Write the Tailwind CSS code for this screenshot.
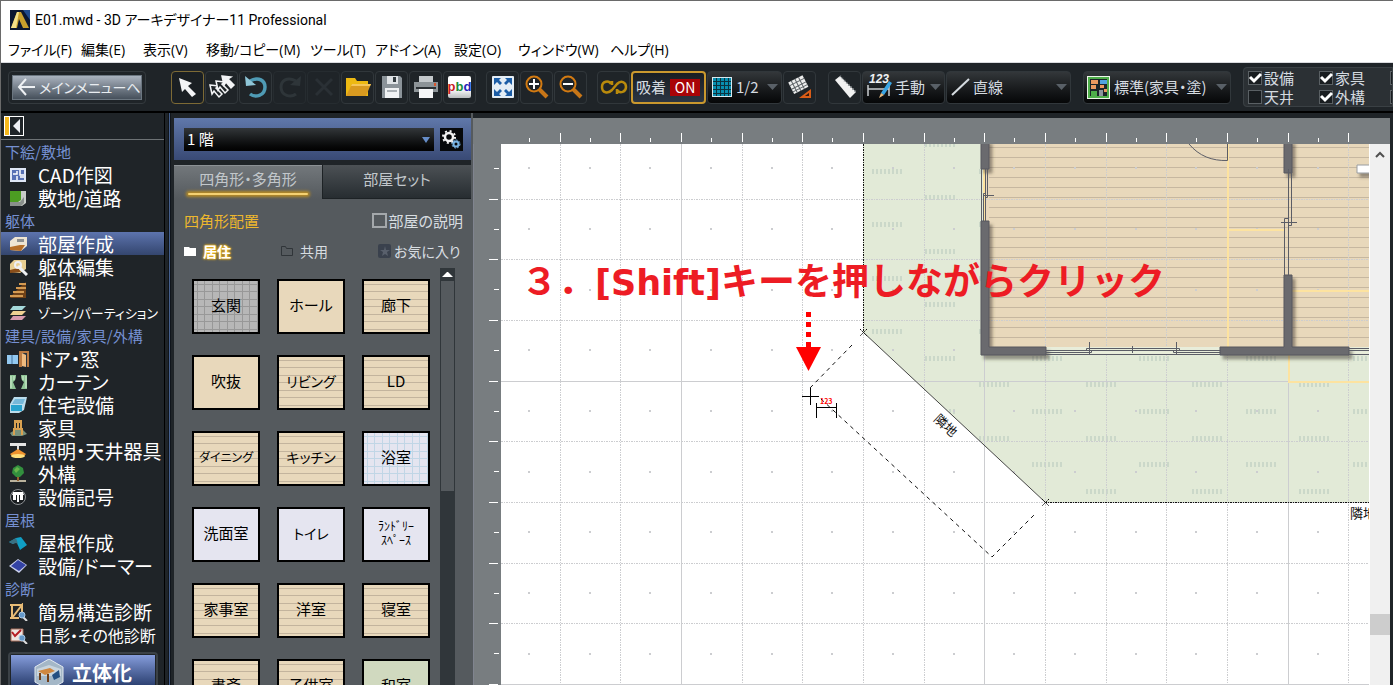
<!DOCTYPE html>
<html lang="ja">
<head>
  <meta charset="UTF-8">
  <meta name="viewport" content="width=device-width, initial-scale=1.0">
  <title>E01.mwd - 3D アーキデザイナー11 Professional</title>
  <script src="https://cdn.jsdelivr.net/npm/@tailwindcss/browser@4"></script>
</head>
<body class="flex h-screen flex-col overflow-hidden border-t border-l border-[#6a6a6a] bg-[#1f2428] font-['Noto_Sans_CJK_JP',sans-serif] text-[15px] leading-5 [font-feature-settings:'palt']">

  <!-- Title and menu -->
  <header class="shrink-0 border-b border-[#d9dade] bg-white text-black">
    <div class="flex h-[37px] items-center gap-[5px] pl-2 font-['Roboto','Noto_Sans_CJK_JP',sans-serif] text-[14px]">
      <svg width="21" height="20" viewBox="0 0 21 20"><rect x="1" width="20" height="20" fill="#0b1730"/><path d="M14 0h7v10z" fill="#1f4a8c"/><path d="M8 2h4l8 16h-6L10 9 8 18H2z" fill="#c9a02c"/><path d="M8 2h2L7 18H2z" fill="#f3e08a"/></svg>
      <h1>E01.mwd - 3D アーキデザイナー11 Professional</h1>
    </div>
    <nav class="flex h-6 items-center whitespace-nowrap pl-[7px] font-['Open_Sans','Noto_Sans_CJK_JP',sans-serif] text-[14px]">
      <a href="#" class="w-[73px]">ファイル(F)</a>
      <a href="#" class="w-[62px]">編集(E)</a>
      <a href="#" class="w-[63px]">表示(V)</a>
      <a href="#" class="w-[104px]">移動/コピー(M)</a>
      <a href="#" class="w-[65px]">ツール(T)</a>
      <a href="#" class="w-[79px]">アドイン(A)</a>
      <a href="#" class="w-[64px]">設定(O)</a>
      <a href="#" class="w-[92px]">ウィンドウ(W)</a>
      <a href="#">ヘルプ(H)</a>
    </nav>
  </header>

  <!-- Toolbar -->
  <div class="flex h-[50px] shrink-0 items-center overflow-hidden border-b-2 border-black pl-[7px] text-[#d5dbe0]">
    <button class="mr-[25px] flex h-[33px] w-[138px] shrink-0 rounded border border-[#343a3e] p-[3px]">
      <span class="flex h-full w-full items-center gap-1 border border-[#6b7680] bg-linear-to-b from-[#aab3bf] to-[#46505b] pl-1 text-[14px] whitespace-nowrap text-[#e9edf1]">
        <svg class="shrink-0" width="18" height="18" viewBox="0 0 18 18" fill="none" stroke="#eef1f4" stroke-width="2"><path d="M18 9H2M9 1L2 9l7 8"/></svg>メインメニューへ
      </span>
    </button>

    <div class="mr-2.5 flex shrink-0 gap-px">
      <button aria-label="選択" class="grid size-[33px] place-items-center rounded border border-[#7d6a35] bg-[#1a1f23]"><svg width="24" height="24" viewBox="0 0 24 24"><path d="M3 3l13 5-4 3 8 8-4 3-7-8-3 3z" fill="#f3f4f6"/></svg></button>
      <button aria-label="複数選択" class="grid size-[33px] place-items-center rounded border border-[#31373b]"><svg width="28" height="28" viewBox="0 0 28 28" fill="#1f2428" stroke="#f3f4f6" stroke-width="1.5"><path d="M2 12l9 1-3 2 6 6-3 3-5-6-2 3z"/><path d="M8 8l9 1-3 2 6 6-3 3-5-6-2 3z"/><path d="M14 3l9 1-3 2 6 6-3 3-5-6-2 3z" fill="#f3f4f6"/></svg></button>
      <button aria-label="元に戻す" class="grid size-[33px] place-items-center rounded border border-[#31373b]"><svg width="24" height="24" viewBox="0 0 24 24"><path d="M6 6c9-5 15 0 15 6 0 9-10 11-15 7" fill="none" stroke="#4f9bb5" stroke-width="3.5"/><path d="M1 1l1 10 10-1z" fill="#8fc6d8"/></svg></button>
      <button aria-label="やり直し" class="grid size-[33px] place-items-center rounded border border-[#262c30]"><svg width="24" height="24" viewBox="0 0 24 24"><path d="M18 6C9 1 3 6 3 12c0 9 10 11 15 7" fill="none" stroke="#2e3539" stroke-width="3"/><path d="M23 1l-1 10-10-1z" fill="#2e3539"/></svg></button>
      <button aria-label="削除" class="grid size-[33px] place-items-center rounded border border-[#262c30]"><svg width="20" height="20" viewBox="0 0 20 20"><path d="M2 2l16 16M18 2L2 18" stroke="#2a3035" stroke-width="3"/></svg></button>
      <button aria-label="開く" class="grid size-[33px] place-items-center rounded border border-[#31373b]"><svg width="26" height="22" viewBox="0 0 26 22"><path d="M1 2h9l2 3h11v15H1z" fill="#edb912"/><path d="M7 8h19l-5 12H1z" fill="#d99a20"/><path d="M7 8h19l-1 2H6z" fill="#f5c65a"/></svg></button>
      <button aria-label="保存" class="grid size-[33px] place-items-center rounded border border-[#31373b]"><svg width="20" height="22" viewBox="0 0 20 22"><path d="M0 0h18l2 2v20H0z" fill="#8b9399"/><path d="M5 0h11v8H5z" fill="#dfe3e6"/><path d="M11 1h3v5h-3z" fill="#333b40"/><path d="M3 12h14v10H3z" fill="#f0f2f4"/><path d="M5 14h10v2H5z" fill="#aab0b5"/></svg></button>
      <button aria-label="印刷" class="grid size-[33px] place-items-center rounded border border-[#31373b]"><svg width="24" height="22" viewBox="0 0 24 22"><path d="M5 0h14v6H5z" fill="#c3c8cb"/><path d="M0 6h24v10H0z" fill="#8c9397"/><path d="M2 11h20v2H2z" fill="#2b3034"/><path d="M5 13h14v9H5z" fill="#f5f6f7"/><path d="M20 7h2v3h-2z" fill="#d9552c"/></svg></button>
      <button aria-label="pbd" class="grid size-[33px] place-items-center rounded border border-[#31373b]"><span class="flex h-[22px] w-[23px] items-center justify-center rounded-xs bg-linear-to-b from-white from-60% to-[#b9bcbe] font-['Liberation_Sans',sans-serif] text-[13px] font-bold"><span class="text-[#c91c25]">p</span><span class="text-[#1b8d3c]">b</span><span class="text-[#2524b8]">d</span></span></button>
    </div>

    <div class="mr-2.5 flex shrink-0 gap-px">
      <button aria-label="全体表示" class="grid size-[33px] place-items-center rounded border border-[#31373b]"><svg width="22" height="22" viewBox="0 0 22 22"><rect width="22" height="22" rx="1" fill="#e4edf5"/><g fill="#1c5da6"><path d="M2 2h7L7 4l3 3-2 2-3-3-3 3zM20 2v7l-3-3-3 3-2-2 3-3-2-2zM2 20v-7l3 3 3-3 2 2-3 3 2 2zM20 20h-7l2-2-3-3 2-2 3 3 3-3z"/></g></svg></button>
      <button aria-label="拡大" class="grid size-[33px] place-items-center rounded border border-[#31373b]"><svg width="24" height="24" viewBox="0 0 24 24" fill="none"><path d="M14 14l8 8" stroke="#c87618" stroke-width="4"/><circle cx="9" cy="9" r="7.5" stroke="#d27a12" stroke-width="2"/><path d="M9 4v10M4 9h10" stroke="#fff" stroke-width="2"/></svg></button>
      <button aria-label="縮小" class="grid size-[33px] place-items-center rounded border border-[#31373b]"><svg width="24" height="24" viewBox="0 0 24 24" fill="none"><path d="M14 14l8 8" stroke="#c87618" stroke-width="4"/><circle cx="9" cy="9" r="7.5" stroke="#d27a12" stroke-width="2"/><path d="M4 9h10" stroke="#fff" stroke-width="2"/></svg></button>
    </div>

    <div class="mr-3 flex shrink-0 gap-px">
      <button aria-label="連続" class="grid size-[33px] place-items-center rounded border border-[#31373b]"><svg width="28" height="18" viewBox="0 0 28 18" fill="none" stroke="#b98a0c" stroke-width="2.5"><path d="M11 6C9 2 2 3 2 9s6 7 10 3l5-6c4-4 9-2 9 3s-6 7-9 3M12 3v4M17 16v-5"/></svg></button>
      <button class="flex h-[33px] w-[75px] items-center gap-1 rounded border-2 border-[#c9982e] bg-linear-to-b from-[#191e23] to-[#2c3643] pl-[3px]">吸着<span class="flex h-[17px] w-[30px] items-center justify-center bg-[#a90407] text-[14px] leading-4 text-white">ON</span></button>
      <div class="relative">
        <select aria-label="グリッド" class="h-[33px] w-[75px] appearance-none rounded border border-[#31373b] bg-linear-to-b from-[#33373a] to-[#060708] pl-7 text-[15px]"><option>1/2</option></select>
        <svg class="pointer-events-none absolute top-[6px] left-[5px]" width="20" height="20" viewBox="0 0 20 20"><rect width="20" height="20" fill="#d9e9ef"/><rect x="1" y="1" width="18" height="18" fill="#088fb0"/><path d="M4.500 1v18M8.500 1v18M12.500 1v18M16.500 1v18M1 4.500h18M1 8.500h18M1 12.500h18M1 16.500h18" stroke="#0c323e"/></svg>
        <svg class="pointer-events-none absolute top-[13px] right-1" width="11" height="6"><path d="M0 0h11L5.500 6z" fill="#596067"/></svg>
      </div>
      <button aria-label="グリッド角度" class="grid size-[33px] place-items-center rounded border border-[#31373b]"><svg width="24" height="24" viewBox="0 0 24 24"><g transform="rotate(-27 11 11)"><rect x="3" y="3" width="16" height="13" fill="#ededed"/><path d="M6.500 3v13M10.500 3v13M14.500 3v13M3 6.500h16M3 10.500h16M3 13.500h16" stroke="#5b6165"/></g><path d="M22 16v6H14z" fill="#32180c" stroke="#d95c17" stroke-width="2"/></svg></button>
    </div>

    <div class="mr-3 flex shrink-0 gap-px">
      <button aria-label="メジャー" class="grid size-[33px] place-items-center rounded border border-[#31373b]"><svg width="24" height="24" viewBox="0 0 24 24"><path d="M2 5l5-4 16 16-6 6z" fill="#f2f2f2"/><path d="M7 1l16 16" stroke="#7b8185" stroke-width="2" stroke-dasharray="1 2"/></svg></button>
      <div class="relative">
        <select aria-label="寸法" class="h-[33px] w-[83px] appearance-none rounded border border-[#31373b] bg-linear-to-b from-[#33373a] to-[#060708] pl-8 text-[15px]"><option>手動</option></select>
        <svg class="pointer-events-none absolute top-[2px] left-[4px]" width="28" height="28" viewBox="0 0 28 28"><text x="3" y="10" font-size="12" font-style="italic" font-weight="bold" font-family="Liberation Sans, sans-serif" fill="#eef0f2">123</text><path d="M2 12v11M23 12v11M2 16h21" stroke="#c9cdd0" stroke-width="1.500"/><path d="M23 8l3 2-8 12-3-2z" fill="#3aa5e5"/><path d="M15 20l3 2-5 3z" fill="#e7bd84"/></svg>
        <svg class="pointer-events-none absolute top-[13px] right-1" width="11" height="6"><path d="M0 0h11L5.500 6z" fill="#596067"/></svg>
      </div>
      <div class="relative">
        <select aria-label="線種" class="h-[33px] w-[125px] appearance-none rounded border border-[#31373b] bg-linear-to-b from-[#33373a] to-[#060708] pl-[26px] text-[15px]"><option>直線</option></select>
        <svg class="pointer-events-none absolute top-[6px] left-[5px]" width="19" height="19"><path d="M1 18L18 2" stroke="#d5dbe0" stroke-width="2"/></svg>
        <svg class="pointer-events-none absolute top-[13px] right-1" width="11" height="6"><path d="M0 0h11L5.500 6z" fill="#596067"/></svg>
      </div>
    </div>

    <div class="relative mr-3 shrink-0">
      <select aria-label="表示テンプレート" class="h-[33px] w-[148px] appearance-none rounded border border-[#31373b] bg-linear-to-b from-[#33373a] to-[#060708] pl-[30px] text-[15px]"><option>標準(家具・塗)</option></select>
      <svg class="pointer-events-none absolute top-[5px] left-[4px]" width="23" height="23" viewBox="0 0 23 23"><rect width="23" height="23" fill="#edf5e9"/><rect x="1" y="1" width="21" height="21" fill="#4eae4a"/><path d="M3 3h17v17H3z" fill="#1c2529"/><path d="M4 4h7v4H4zM4 9h5v4H4zM13 9h4v3h-4zM17 13h3v3h-3z" fill="#eb9a60"/><path d="M13 4h7v4h-7z" fill="#4fa3e0"/><path d="M4 15h6v5H4z" fill="#4eae4a"/><path d="M12 14h4v6h-4z" fill="#8c969d"/></svg>
      <svg class="pointer-events-none absolute top-[13px] right-1" width="11" height="6"><path d="M0 0h11L5.500 6z" fill="#596067"/></svg>
    </div>

    <fieldset class="grid h-10 min-w-0 flex-1 grid-cols-[71px_71px_16px] grid-rows-2 content-center items-center overflow-hidden rounded-l border border-[#3a4044] bg-[#2b3034] pl-1 whitespace-nowrap">
      <label class="relative flex items-center gap-0.5"><input type="checkbox" checked class="peer size-[14px] appearance-none border border-[#5a6064] bg-[#191d20]"><svg class="pointer-events-none absolute left-0 hidden peer-checked:block" width="14" height="14" fill="none" stroke="#fff" stroke-width="3"><path d="M2 6l4 4 7-7"/></svg>設備</label>
      <label class="relative flex items-center gap-0.5"><input type="checkbox" checked class="peer size-[14px] appearance-none border border-[#5a6064] bg-[#191d20]"><svg class="pointer-events-none absolute left-0 hidden peer-checked:block" width="14" height="14" fill="none" stroke="#fff" stroke-width="3"><path d="M2 6l4 4 7-7"/></svg>家具</label>
      <input type="checkbox" aria-label="表示1" class="size-[14px] appearance-none border border-[#5a6064] bg-[#191d20]">
      <label class="relative flex items-center gap-0.5"><input type="checkbox" class="peer size-[14px] appearance-none border border-[#5a6064] bg-[#191d20]">天井</label>
      <label class="relative flex items-center gap-0.5"><input type="checkbox" checked class="peer size-[14px] appearance-none border border-[#5a6064] bg-[#191d20]"><svg class="pointer-events-none absolute left-0 hidden peer-checked:block" width="14" height="14" fill="none" stroke="#fff" stroke-width="3"><path d="M2 6l4 4 7-7"/></svg>外構</label>
      <input type="checkbox" aria-label="表示2" class="size-[14px] appearance-none border border-[#5a6064] bg-[#191d20]">
    </fieldset>
  </div>

  <main class="flex min-h-0 flex-1">
    <!-- Navigation -->
    <aside class="flex w-[163px] shrink-0 flex-col overflow-hidden pt-[3px]">
      <button aria-label="メニューを閉じる" class="mb-[3px] ml-[3px] flex size-5 shrink-0 border border-white bg-[#1f2428]"><svg width="18" height="18"><path d="M0 0h4v18H0z" fill="#f5b81c"/><path d="M4 0h1v18H4z" fill="#fff"/><path d="M15 2v14L8 9z" fill="#eef0f4"/></svg></button>
      <nav class="border-t border-[#6d7275] whitespace-nowrap text-white">
        <h2 class="h-[23px] pl-1 text-[15px] leading-6 text-[#7590d2]">下絵/敷地</h2>
        <a href="#" class="flex h-[23px] items-center gap-2.5 pl-2 text-[19px]"><svg class="shrink-0" width="19" height="18"><rect x="1" y="2" width="16" height="14" fill="#dfe7f6"/><path d="M3 4h12v10H3z" fill="#5771b5"/><path d="M4 8h4V5M8 10v4M11 4v5h4M11 11h4" fill="none" stroke="#fff" stroke-width="1.500"/></svg>CAD作図</a>
        <a href="#" class="flex h-[23px] items-center gap-2.5 pl-2 text-[19px]"><svg class="shrink-0" width="19" height="18"><path d="M1 2h16v12l-4 3H1z" fill="#c8ccc8"/><path d="M1 2h11v9l-3 2H1z" fill="#4c9c22"/><path d="M1 13h10l4-5v6l-3 3H1z" fill="#898f8b"/></svg>敷地/道路</a>
        <h2 class="h-[23px] pl-1 text-[15px] leading-6 text-[#7590d2]">躯体</h2>
        <a href="#" aria-current="page" class="flex h-[23px] items-center gap-2.5 bg-linear-to-b from-[#5d74ae] to-[#34466f] pl-2 text-[19px]"><svg class="shrink-0" width="19" height="18"><path d="M1 6l5-4h12v9l-6 5-11-1z" fill="#eee5d3"/><path d="M8 4h7v3H8z" fill="#8f9190"/><path d="M1 12l10-2h5l-4 6-11-1z" fill="#b56e28"/></svg>部屋作成</a>
        <a href="#" class="flex h-[23px] items-center gap-2.5 pl-2 text-[19px]"><svg class="shrink-0" width="19" height="18"><path d="M1 6l4-4h12v9l-6 4-10-1z" fill="#e8cf92"/><path d="M1 12l8-2 3 4-11 1z" fill="#8b4e19"/><path d="M9 8l9 9" stroke="#eef0f4" stroke-width="3"/><circle cx="9" cy="7" r="3" fill="none" stroke="#eef0f4" stroke-width="2"/></svg>躯体編集</a>
        <a href="#" class="flex h-[23px] items-center gap-2.5 pl-2 text-[19px]"><svg class="shrink-0" width="19" height="18"><path d="M17 1v16H1l3-4 4-4 4-4z" fill="#704218"/><path d="M10 3h7M7 7h10M4 11h11M1 15h13" stroke="#d39a52" stroke-width="2"/></svg>階段</a>
        <a href="#" class="flex h-[23px] items-center gap-2.5 pl-2 text-[13px]"><svg class="shrink-0" width="19" height="18"><path d="M4 2h13l-4 4H1z" fill="#a5d9db"/><path d="M4 7h13l-4 4H1z" fill="#eed092"/><path d="M4 12h13l-4 4H1z" fill="#d79aae"/></svg>ゾーン/パーティション</a>
        <h2 class="h-[23px] pl-1 text-[15px] leading-6 text-[#7590d2]">建具/設備/家具/外構</h2>
        <a href="#" class="flex h-[23px] items-center gap-2 pl-1.5 text-[19px]"><svg class="shrink-0" width="23" height="18"><path d="M0 5h11v9H0z" fill="#93c8ef"/><path d="M5 5v9" stroke="#44729b"/><path d="M12 1h10v16H12z" fill="#bb7a42"/><path d="M15 3h5v14h-5z" fill="#29323c"/><path d="M15 3l4 2v12l-4-1z" fill="#efbb80"/></svg>ドア・窓</a>
        <a href="#" class="flex h-[23px] items-center gap-2.5 pl-2 text-[19px]"><svg class="shrink-0" width="19" height="18"><path d="M1 2h6c0 4-1 6-3 7l3 7H1zM18 2h-6c0 4 1 6 3 7l-3 7h6z" fill="#8fc596"/><path d="M2 3v12M5 3v4M17 3v12M14 3v4" stroke="#d6f0d4"/></svg>カーテン</a>
        <a href="#" class="flex h-[23px] items-center gap-2.5 pl-2 text-[19px]"><svg class="shrink-0" width="19" height="18"><path d="M5 1h13l-3 13-5 3H1V8z" fill="#bbdcec"/><path d="M6 3h10l-2 5H3z" fill="#77b8d9"/><path d="M2 9h11v6H2z" fill="#29a3ce"/></svg>住宅設備</a>
        <a href="#" class="flex h-[23px] items-center gap-2.5 pl-2 text-[19px]"><svg class="shrink-0" width="19" height="18"><path d="M1 14l5-3h8l4 4-5 2H3z" fill="#79917b"/><path d="M5 1h8v3H5z" fill="#d9a151"/><path d="M6 1v8M12 1v8M9 3v6M4 10h10M5 10v6M13 10v6" fill="none" stroke="#d9a151" stroke-width="2"/></svg>家具</a>
        <a href="#" class="flex h-[23px] items-center gap-2.5 pl-2 text-[19px]"><svg class="shrink-0" width="19" height="18"><path d="M1 1h16v3H1z" fill="#e4e4e4"/><path d="M9 4v5" stroke="#ddd" stroke-width="2"/><path d="M9 7l8 5-3 3H4l-3-3z" fill="#ef922e"/><ellipse cx="9" cy="14" rx="7" ry="2" fill="#ffdf7b"/></svg>照明・天井器具</a>
        <a href="#" class="flex h-[23px] items-center gap-2.5 pl-2 text-[19px]"><svg class="shrink-0" width="19" height="18"><path d="M1 16h16" stroke="#b9b29d" stroke-width="2"/><path d="M9 8v8" stroke="#96612e" stroke-width="2"/><path d="M9 0l5 3 1 5-4 4H7L3 8l1-5z" fill="#328f3e"/><path d="M8 2l3 2-4 4-2-3z" fill="#68b44c"/></svg>外構</a>
        <a href="#" class="flex h-[23px] items-center gap-2.5 pl-2 text-[19px]"><svg class="shrink-0" width="19" height="18"><circle cx="9" cy="9" r="7.500" fill="#191d20" stroke="#8d9194"/><path d="M4 4h10l1 3H3zM4 7h3v5H4zM8 7h2v7H8zM11 7h3v5h-3z" fill="#fff"/></svg>設備記号</a>
        <h2 class="h-[23px] pl-1 text-[15px] leading-6 text-[#7590d2]">屋根</h2>
        <a href="#" class="flex h-[23px] items-center gap-2.5 pl-2 text-[19px]"><svg class="shrink-0" width="19" height="18"><path d="M7 4l5-1 6 8-7 5-4-9-3 3-4-2z" fill="#109fc5"/><path d="M0 8l7-4 2 6-2-1-3 1z" fill="#3a7082"/></svg>屋根作成</a>
        <a href="#" class="flex h-[23px] items-center gap-2.5 pl-2 text-[19px]"><svg class="shrink-0" width="19" height="18"><path d="M0 9l9-7 9 6-8 8z" fill="#cbd1ed"/><path d="M2 9l7-6 8 5-7 6z" fill="#3443a5"/></svg>設備/ドーマー</a>
        <h2 class="h-[23px] pl-1 text-[15px] leading-6 text-[#7590d2]">診断</h2>
        <a href="#" class="flex h-[23px] items-center gap-2.5 pl-2 text-[19px]"><svg class="shrink-0" width="19" height="18" fill="none"><path d="M1 2h13M3 2v13M3 15L13 2v7M1 15h9" stroke="#e7bc77" stroke-width="2"/><path d="M14 14l4 4" stroke="#ddd" stroke-width="2"/><circle cx="13" cy="12" r="3" fill="#6599ca" stroke="#a9c9e5"/></svg>簡易構造診断</a>
        <a href="#" class="flex h-[23px] items-center gap-2.5 pl-2 text-[16px]"><svg class="shrink-0" width="19" height="18" fill="none"><path d="M2 3h12v12H2z" fill="#efe6e2" stroke="#a86f5b"/><path d="M3 6l3 4 6-6" stroke="#b61e25" stroke-width="2"/><path d="M14 14l4 4" stroke="#ddd" stroke-width="2"/><circle cx="13" cy="12" r="3" fill="#6599ca" stroke="#a9c9e5"/></svg>日影・その他診断</a>
      </nav>
      <button class="mt-1.5 mr-1.5 ml-[7px] flex h-10 shrink-0 items-start rounded border-2 border-[#3b4146] p-px text-[20px] leading-8 font-bold text-white">
        <span class="flex h-full w-full items-start justify-center gap-2 bg-linear-to-b from-[#869ddc] to-[#233766] pt-0.5"><svg class="mt-0.5" width="30" height="32" viewBox="0 0 30 32"><path d="M15 0l14 8v15l-14 8-14-8V8z" fill="#a4b7c7" stroke="#e1e8ef"/><path d="M3 10l12-4 12 4v7H3z" fill="#c9d5de"/><path d="M4 12l12-3 5 3-10 4z" fill="#cf8740"/><path d="M6 14v7M14 15v8" stroke="#713e17" stroke-width="2"/><path d="M18 16l7-5 1 7-6 3z" fill="#244f82"/></svg>立体化</span>
      </button>
    </aside>
    <div class="flex w-[10px] shrink-0 border-l border-black"><div class="ml-[3px] w-[3px] border-x border-[#10151b] bg-[#445e8c]"></div></div>

    <!-- Room parts -->
    <section class="flex w-[299px] shrink-0 flex-col bg-[#555a5e] pr-0.5">
      <div class="h-[5px] shrink-0 bg-[#1f2428]"></div>
      <div class="flex h-[42px] shrink-0 items-center gap-1.5 bg-linear-to-b from-[#6078aa] to-[#394a75] pl-[10px]">
        <div class="relative">
          <select aria-label="階" class="h-[23px] w-[250px] appearance-none bg-linear-to-b from-[#33373a] to-[#020202] pl-[3px] text-[15px] leading-5 text-white"><option>1 階</option></select>
          <svg class="pointer-events-none absolute top-[9px] right-1" width="8" height="6"><path d="M0 0h8L4 6z" fill="#668dc9"/></svg>
        </div>
        <button aria-label="設定" class="grid size-[23px] place-items-center bg-[#07090b]"><svg width="19" height="19" viewBox="0 0 19 19" fill="none"><circle cx="7" cy="7" r="4" stroke="#f3f3f3" stroke-width="2.500"/><circle cx="7" cy="7" r="6" stroke="#f3f3f3" stroke-width="2" stroke-dasharray="2 2.700"/><circle cx="14" cy="14" r="2.500" stroke="#78b4e4" stroke-width="2"/><circle cx="14" cy="14" r="4" stroke="#78b4e4" stroke-dasharray="2 1"/></svg></button>
      </div>
      <div class="flex h-[39px] shrink-0 border-t-[5px] border-[#1f2428] text-[#c2c7cb]">
        <button class="relative flex flex-1 justify-center border-t border-[#8c9195] bg-linear-to-b from-[#72777b] to-[#555a5e] pt-[3px]">四角形・多角形<span class="absolute inset-x-3.5 bottom-1 h-0.5 rounded bg-[#f4d172] shadow-[0_0_3px_2px_#b68b25]"></span></button>
        <button class="flex flex-1 justify-center border-b border-l border-[#1d2225] bg-linear-to-b from-[#4c5155] to-[#272d31] pt-1">部屋セット</button>
      </div>
      <div class="flex h-[43px] shrink-0 items-center justify-between pr-2 pl-[10px]">
        <h2 class="text-[#edb72e]">四角形配置</h2>
        <label class="flex items-center gap-0.5 text-[#d8dde1]"><input type="checkbox" class="size-[15px] appearance-none border-2 border-[#a4a8ab]">部屋の説明</label>
      </div>
      <div class="grid h-[18px] shrink-0 grid-cols-[97px_97px_1fr] items-center pl-[10px] text-[14px] leading-[18px] text-[#d8dde1]">
        <button class="flex items-center gap-1.5 font-bold text-white [text-shadow:0_0_3px_#f1b51b,0_0_2px_#f1b51b,0_0_2px_#f1b51b]"><svg width="13" height="10"><path d="M0 1h5l1 1h6v8H0z" fill="#fff"/></svg>居住</button>
        <button class="flex items-center gap-1.5"><svg width="13" height="10" fill="none" stroke="#303539"><path d="M.5 .5h4l1 2h6v7H.5z"/></svg>共用</button>
        <button class="flex items-center gap-0.5 whitespace-nowrap"><svg class="shrink-0" width="14" height="14"><rect width="13" height="14" rx="2" fill="#3a414d"/><path d="M7 2l1 4h4L9 8l1 4-3-2-3 2 1-4-3-2h4z" fill="#59606c"/></svg>お気に入り</button>
      </div>
      <div class="mt-1.5 flex min-h-0 flex-1 justify-between pr-4 pl-[18px]">
        <div class="mt-[13px] grid auto-rows-[55px] grid-cols-3 gap-x-[17px] gap-y-[21px] text-black *:pb-[3px]">
          <button class="w-[68px] border-2 border-black bg-[#b7b7b7] bg-[repeating-linear-gradient(#0000_0_3px,#989898_3px_4px,#0000_4px_10px,#989898_10px_11px,#0000_11px_15px),repeating-linear-gradient(90deg,#0000_0_3px,#989898_3px_4px,#0000_4px_10px,#989898_10px_11px,#0000_11px_15px)]">玄関</button>
          <button class="w-[68px] border-2 border-black bg-[#e8d8bb]">ホール</button>
          <button class="w-[68px] border-2 border-black bg-[#e8d8bb] bg-[repeating-linear-gradient(#0000_0_3px,#c3b49d_3px_4px,#0000_4px_10px,#c3b49d_10px_11px,#0000_11px_15px)]">廊下</button>
          <button class="w-[68px] border-2 border-black bg-[#e8d8bb]">吹抜</button>
          <button class="w-[68px] border-2 border-black bg-[#e8d8bb] bg-[repeating-linear-gradient(#0000_0_3px,#c3b49d_3px_4px,#0000_4px_10px,#c3b49d_10px_11px,#0000_11px_15px)] text-[14px]">リビング</button>
          <button class="w-[68px] border-2 border-black bg-[#e8d8bb] bg-[repeating-linear-gradient(#0000_0_3px,#c3b49d_3px_4px,#0000_4px_10px,#c3b49d_10px_11px,#0000_11px_15px)]">LD</button>
          <button class="w-[68px] border-2 border-black bg-[#e8d8bb] bg-[repeating-linear-gradient(#0000_0_3px,#c3b49d_3px_4px,#0000_4px_10px,#c3b49d_10px_11px,#0000_11px_15px)] text-[12px]">ダイニング</button>
          <button class="w-[68px] border-2 border-black bg-[#e8d8bb] bg-[repeating-linear-gradient(#0000_0_3px,#c3b49d_3px_4px,#0000_4px_10px,#c3b49d_10px_11px,#0000_11px_15px)] text-[14px]">キッチン</button>
          <button class="w-[68px] border-2 border-black bg-[#e5e5f0] bg-[repeating-linear-gradient(#0000_0_3px,#c1d6e6_3px_4px,#0000_4px_10px,#c1d6e6_10px_11px,#0000_11px_15px),repeating-linear-gradient(90deg,#0000_0_3px,#c1d6e6_3px_4px,#0000_4px_10px,#c1d6e6_10px_11px,#0000_11px_15px)]">浴室</button>
          <button class="w-[68px] border-2 border-black bg-[#e5e5f0]">洗面室</button>
          <button class="w-[68px] border-2 border-black bg-[#e5e5f0] text-[14px]">トイレ</button>
          <button class="w-[68px] border-2 border-black bg-[#e5e5f0] text-[12px] leading-[14px] [font-feature-settings:normal]">ﾗﾝﾄﾞﾘｰ<br>ｽﾍﾟｰｽ</button>
          <button class="w-[68px] border-2 border-black bg-[#e8d8bb] bg-[repeating-linear-gradient(#0000_0_3px,#c3b49d_3px_4px,#0000_4px_10px,#c3b49d_10px_11px,#0000_11px_15px)]">家事室</button>
          <button class="w-[68px] border-2 border-black bg-[#e8d8bb] bg-[repeating-linear-gradient(#0000_0_3px,#c3b49d_3px_4px,#0000_4px_10px,#c3b49d_10px_11px,#0000_11px_15px)]">洋室</button>
          <button class="w-[68px] border-2 border-black bg-[#e8d8bb] bg-[repeating-linear-gradient(#0000_0_3px,#c3b49d_3px_4px,#0000_4px_10px,#c3b49d_10px_11px,#0000_11px_15px)]">寝室</button>
          <button class="w-[68px] border-2 border-black bg-[#e8d8bb] bg-[repeating-linear-gradient(#0000_0_3px,#c3b49d_3px_4px,#0000_4px_10px,#c3b49d_10px_11px,#0000_11px_15px)]">書斎</button>
          <button class="w-[68px] border-2 border-black bg-[#e8d8bb] bg-[repeating-linear-gradient(#0000_0_3px,#c3b49d_3px_4px,#0000_4px_10px,#c3b49d_10px_11px,#0000_11px_15px)]">子供室</button>
          <button class="w-[68px] border-2 border-black bg-[#d0d9bf]">和室</button>
        </div>
        <div class="mt-0.5 flex w-[15px] flex-col border-x border-[#30363a] bg-[#30363a]">
          <button aria-label="上へ" class="grid h-[13px] shrink-0 place-items-center"><svg width="11" height="5"><path d="M5 0h1l5 5H0z" fill="#fff"/></svg></button>
          <div class="h-[210px] shrink-0 bg-[#555a5e]"></div>
        </div>
      </div>
    </section>

    <!-- Floor plan -->
    <section class="mt-[5px] mr-[3px] grid min-w-0 flex-1 grid-cols-[28px_1fr_21px] grid-rows-[26px_1fr] bg-[#787d80]">
      <svg id="ruler-x" class="col-start-2 h-full w-full"></svg>
      <svg id="ruler-y" class="col-start-1 row-start-2 h-full w-full border-l border-[#80848f]"></svg>
      <div class="relative col-start-2 row-start-2 min-h-0 overflow-hidden bg-white">
        <svg class="absolute inset-0 h-full w-full">
          <defs>
            <clipPath id="site-clip"><path d="M862 0H1500V502H1045L863 332z"/></clipPath>
            <filter id="shadow" x="-20%" y="-20%" width="150%" height="150%"><feDropShadow dx="3" dy="4" stdDeviation="1.5" flood-color="#403a30" flood-opacity=".5"/></filter>
          </defs>
          <!-- the plan is drawn in window coordinates, the sheet starts at 501,144 -->
          <g transform="translate(-501 -144)">
            <path d="M863 144H1500V502H1045L863 332z" fill="#e2ead7"/>
            <g id="grass" clip-path="url(#site-clip)" stroke="#cbd8c9" stroke-width="2"></g>
            <path d="M984 144H1400V350H984z" fill="#e8d8bb"/>
            <path id="boards" stroke="#c6b7a0"/>
            <g id="grid" stroke="#cccdd0"></g>
            <g fill="none" stroke="#fde3a0" stroke-width="2">
              <path d="M1228 144V348M1228 230H1284M1292 291H1400M1289 355V382H1400"/>
              <path d="M984 169V221"/>
            </g>
            <path d="M1045 347H1221V355H1045zM1349 347H1400V355H1349z" fill="#e8edda"/>
            <g fill="#6a6b6e" filter="url(#shadow)">
              <path d="M981 140H989V169H981zM981 221H989V347H1046V355H981zM1284 140H1292V173H1284zM1284 275H1292V347H1349V355H1220V347H1284z" stroke="#58595f"/>
              <path d="M1357 165H1400V173H1357z" fill="#fff" stroke="#999ca0"/>
            </g>
            <g fill="none" stroke="#5b5d66">
              <path d="M981.500 169V221M985.500 169V197.500H987.500V169M983.500 221V193.500H985.500V221M983 195.500H994"/>
              <path d="M1288.500 169V225.500H1291.500V169M1284.500 275V218.500H1288.500V275M1281 222.500H1297"/>
              <path d="M1046 354.500H1221M1046 350.500H1091.500V352.500H1046M1086.500 350.500V348.500H1179.500V350.500zM1221 350.500H1173.500V352.500H1221M1089.500 342V354M1132.500 346V353M1176.500 342V354"/>
              <path d="M1349 348.500H1400M1349 350.500H1400M1349 354.500H1400"/>
              <path d="M1189 144C1199 156 1212 161 1227.500 160.500V144"/>
            </g>
            <path d="M863.500 144V332M1045 502.500H1400" stroke="#111" stroke-dasharray="2 1 1 1"/>
            <path d="M863 332L1045 502" stroke="#444"/>
            <path d="M860 329l7 7M867 329l-7 7M1042 499l7 7M1049 499l-7 7" stroke="#111" stroke-dasharray="2 1"/>
            <path d="M852 345L810 388M821 399L992 557L1036 513" fill="none" stroke="#111" stroke-dasharray="4 4"/>
            <g font-size="13" fill="#111">
              <text x="1350" y="518">隣地</text>
              <text transform="translate(933 420) rotate(43)">隣地</text>
            </g>
            <path d="M802 396.500H819M810.500 388V405M816.500 403V418M836.500 403V418M816 407.500H837" stroke="#000"/>
            <text x="820" y="404" font-size="7" font-weight="bold" fill="#f00">123</text>
            <path d="M808.500 312V347" stroke="#f00" stroke-width="5" stroke-dasharray="5"/>
            <path d="M796 347H821L808.500 371z" fill="#f00"/>
          </g>
        </svg>
        <p class="absolute top-[108px] left-5 text-[37px] leading-[54px] font-bold whitespace-nowrap text-[#ed1c24] [font-feature-settings:normal]">３．<span class="font-['DejaVu_Sans',sans-serif] text-[35px]">[Shift]</span>キーを押しながらクリック</p>
      </div>
      <div class="col-start-3 row-start-2 flex flex-col items-center border-l border-white bg-[#f0f0f0]">
        <button aria-label="上へスクロール" class="grid h-5 w-full shrink-0 place-items-center"><svg width="10" height="7" fill="none" stroke="#505050" stroke-width="2"><path d="M1 6l4-4 4 4"/></svg></button>
        <div class="mt-[450px] h-[21px] w-full shrink-0 bg-[#cdcdcd]"></div>
      </div>
    </section>
  </main>

  <script>
    const pitch = 60.67;

    function draw(parent, d, attrs = {}) {
      const path = document.createElementNS('http://www.w3.org/2000/svg', 'path');
      path.setAttribute('d', d);
      for (const key in attrs) path.setAttribute(key, attrs[key]);
      document.getElementById(parent).appendChild(path);
    }

    // grid lines, every fifth one is solid
    for (let i = -1; i < 30; i++) {
      const x = Math.floor(560.05 + i * pitch) + 0.5;
      const y = Math.floor(199.3 + i * pitch) + 0.5;
      const solidX = i % 5 === 2;
      const solidY = i % 5 === 3;
      draw('grid', `M${x} 144V2000`, solidX ? {} : { 'stroke-dasharray': '2 1 1 1' });
      draw('grid', `M501 ${y}H3000`, solidY ? {} : { 'stroke-dasharray': '2 1 1 1' });
      draw('ruler-x', `M${x - 501} 15v9M${Math.floor(x - 501 + pitch / 2) + 0.5} 20v4`, { stroke: '#fff' });
      draw('ruler-y', `M15 ${y - 144}h9M20 ${Math.floor(y - 144 + pitch / 2) + 0.5}h5`, { stroke: '#fff' });
      for (let j = -2; j < 30; j++) {
        draw('grid', `M${Math.floor(x + pitch / 2) - 1} ${Math.floor(199 + pitch / 2 + j * pitch)}h2`, { 'stroke-width': 2 });
      }
    }

    // grass marks, staggered columns
    for (let c = 0; c < 12; c++) {
      for (let r = 0; r < 8; r++) {
        const x = Math.round(872 + c * 53.4);
        const y = Math.round((c % 2 ? 142 : 168.7) + r * 53.4);
        draw('grass', `M${x} ${y + 2.5}h32`, { 'stroke-width': 5, 'stroke-dasharray': '2 2' });
      }
    }

    let boards = '';
    for (let y = 147.5; y < 347; y += 10) boards += `M989 ${y}H1400`;
    document.getElementById('boards').setAttribute('d', boards);
  </script>
</body>
</html>
